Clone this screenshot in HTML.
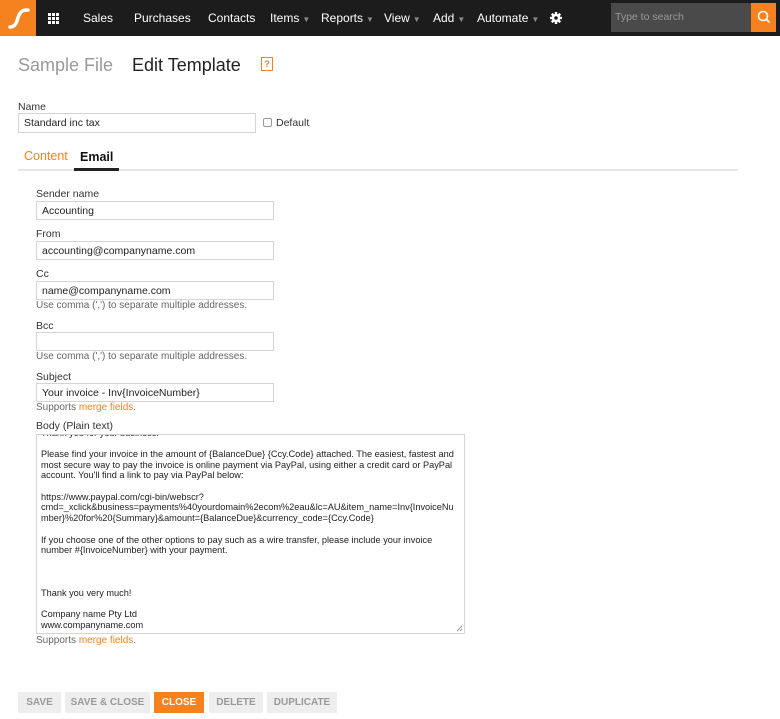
<!DOCTYPE html>
<html><head><meta charset="utf-8"><style>
*{box-sizing:border-box;margin:0;padding:0}
body{width:780px;height:719px;background:#fff;font-family:"Liberation Sans",Arial,sans-serif;position:relative;overflow:hidden;color:#222}
.a{position:absolute;white-space:nowrap;line-height:14px}
.nav{position:absolute;left:0;top:0;width:780px;height:36px;background:#1c1c1c}
.nv{position:absolute;top:11px;color:#fff;font-size:12px;line-height:14px}
.car{color:#888;font-size:8px;margin-left:3px}
.lbl{font-size:10.5px;color:#333}
.inp{position:absolute;border:1px solid #d4d4d4;background:#fff;font-size:10.5px;padding:0 5px;line-height:18px;color:#222}
.help{font-size:10px;color:#666}
.or{color:#f5821f}
.btn{position:absolute;top:692px;height:21px;background:#eee;color:#999;font-weight:bold;font-size:10px;text-align:center;line-height:21px}
</style></head><body>
<div class="nav">
 <div style="position:absolute;left:0;top:0;width:36px;height:36px;background:#f5821f">
  <svg width="36" height="36"><path d="M10 27 C17 27 17 19 19 15 C21 11 23 10 28 10" stroke="#fff" stroke-width="3.5" fill="none" stroke-linecap="round"/></svg>
 </div>
 <svg style="position:absolute;left:48px;top:13px" width="11" height="11"><g fill="#fff"><rect x="0" y="0" width="3" height="3"/><rect x="4" y="0" width="3" height="3"/><rect x="8" y="0" width="3" height="3"/><rect x="0" y="4" width="3" height="3"/><rect x="4" y="4" width="3" height="3"/><rect x="8" y="4" width="3" height="3"/><rect x="0" y="8" width="3" height="3"/><rect x="4" y="8" width="3" height="3"/><rect x="8" y="8" width="3" height="3"/></g></svg>
 <div class="nv" style="left:83px">Sales</div>
 <div class="nv" style="left:134px">Purchases</div>
 <div class="nv" style="left:208px">Contacts</div>
 <div class="nv" style="left:270px">Items<span class="car">▼</span></div>
 <div class="nv" style="left:321px">Reports<span class="car">▼</span></div>
 <div class="nv" style="left:384px">View<span class="car">▼</span></div>
 <div class="nv" style="left:433px">Add<span class="car">▼</span></div>
 <div class="nv" style="left:477px">Automate<span class="car">▼</span></div>
 <svg style="position:absolute;left:550px;top:12px" width="12" height="12" viewBox="0 0 12 12"><g fill="#fff"><circle cx="6" cy="6" r="4.2"/><rect x="4.8" y="0" width="2.4" height="12"/><rect x="0" y="4.8" width="12" height="2.4"/><rect x="4.8" y="0" width="2.4" height="12" transform="rotate(45 6 6)"/><rect x="4.8" y="0" width="2.4" height="12" transform="rotate(-45 6 6)"/></g><circle cx="6" cy="6" r="1.8" fill="#1c1c1c"/></svg>
 <div style="position:absolute;left:611px;top:3px;width:140px;height:29px;background:#4a4a4a;color:#999;font-size:10.5px;line-height:29px;padding-left:4px">Type to search</div>
 <div style="position:absolute;left:751px;top:3px;width:25px;height:29px;background:#f5821f">
  <svg width="25" height="29"><circle cx="12" cy="13" r="4.5" stroke="#fff" stroke-width="1.6" fill="none"/><path d="M15.3 16.3 L18.5 19.5" stroke="#fff" stroke-width="1.8"/></svg>
 </div>
</div>
<div class="a" style="left:18px;top:54px;font-size:18px;line-height:22px;color:#999">Sample File</div>
<div class="a" style="left:132px;top:54px;font-size:18px;line-height:22px;color:#222">Edit Template</div>
<div style="position:absolute;left:261px;top:57px;width:12px;height:14px;border:1px solid #f5821f;color:#f5821f;font-size:9px;font-weight:bold;text-align:center;line-height:12px">?</div>

<div class="a lbl" style="left:18px;top:100px">Name</div>
<div class="inp" style="left:18px;top:113px;width:238px;height:20px">Standard inc tax</div>
<div style="position:absolute;left:263px;top:118px;width:9px;height:9px;border:1px solid #999;border-radius:2px"></div>
<div class="a lbl" style="left:276px;top:116px">Default</div>

<div class="a" style="left:24px;top:149px;font-size:12.5px;color:#f5821f">Content</div>
<div class="a" style="left:80px;top:150px;font-size:12.5px;font-weight:bold;color:#111">Email</div>
<div style="position:absolute;left:18px;top:169px;width:720px;height:2px;background:#e6e6e6"></div>
<div style="position:absolute;left:74px;top:168px;width:45px;height:3px;background:#222"></div>

<div class="a lbl" style="left:36px;top:187px">Sender name</div>
<div class="inp" style="left:36px;top:201px;width:238px;height:19px">Accounting</div>
<div class="a lbl" style="left:36px;top:227px">From</div>
<div class="inp" style="left:36px;top:241px;width:238px;height:19px">accounting@companyname.com</div>
<div class="a lbl" style="left:36px;top:267px">Cc</div>
<div class="inp" style="left:36px;top:281px;width:238px;height:19px">name@companyname.com</div>
<div class="a help" style="left:36px;top:299px">Use comma (',') to separate multiple addresses.</div>
<div class="a lbl" style="left:36px;top:319px">Bcc</div>
<div class="inp" style="left:36px;top:332px;width:238px;height:19px"></div>
<div class="a help" style="left:36px;top:350px">Use comma (',') to separate multiple addresses.</div>
<div class="a lbl" style="left:36px;top:370px">Subject</div>
<div class="inp" style="left:36px;top:383px;width:238px;height:19px">Your invoice - Inv{InvoiceNumber}</div>
<div class="a help" style="left:36px;top:401px">Supports <span class="or">merge fields</span>.</div>
<div class="a lbl" style="left:36px;top:419px">Body (Plain text)</div>
<div style="position:absolute;left:36px;top:434px;width:429px;height:200px;border:1px solid #d4d4d4;overflow:hidden">
 <div style="position:absolute;left:4px;top:-7.5px;font-size:9.2px;line-height:10.7px;color:#222;white-space:pre">Thank you for your business.

Please find your invoice in the amount of {BalanceDue} {Ccy.Code} attached. The easiest, fastest and
most secure way to pay the invoice is online payment via PayPal, using either a credit card or PayPal
account. You'll find a link to pay via PayPal below:

https://www.paypal.com/cgi-bin/webscr?
cmd=_xclick&amp;business=payments%40yourdomain%2ecom%2eau&amp;lc=AU&amp;item_name=Inv{InvoiceNu
mber}%20for%20{Summary}&amp;amount={BalanceDue}&amp;currency_code={Ccy.Code}

If you choose one of the other options to pay such as a wire transfer, please include your invoice
number #{InvoiceNumber} with your payment.



Thank you very much!

Company name Pty Ltd
www.companyname.com</div>
 <svg style="position:absolute;right:1px;bottom:1px" width="7" height="7"><path d="M6 1L1 6M6 4L4 6" stroke="#999"/></svg>
</div>
<div class="a help" style="left:36px;top:634px">Supports <span class="or">merge fields</span>.</div>

<div class="btn" style="left:18px;width:43px">SAVE</div>
<div class="btn" style="left:65px;width:85px">SAVE &amp; CLOSE</div>
<div class="btn" style="left:154px;width:50px;background:#f5821f;color:#fff">CLOSE</div>
<div class="btn" style="left:209px;width:54px">DELETE</div>
<div class="btn" style="left:267px;width:70px">DUPLICATE</div>
</body></html>
